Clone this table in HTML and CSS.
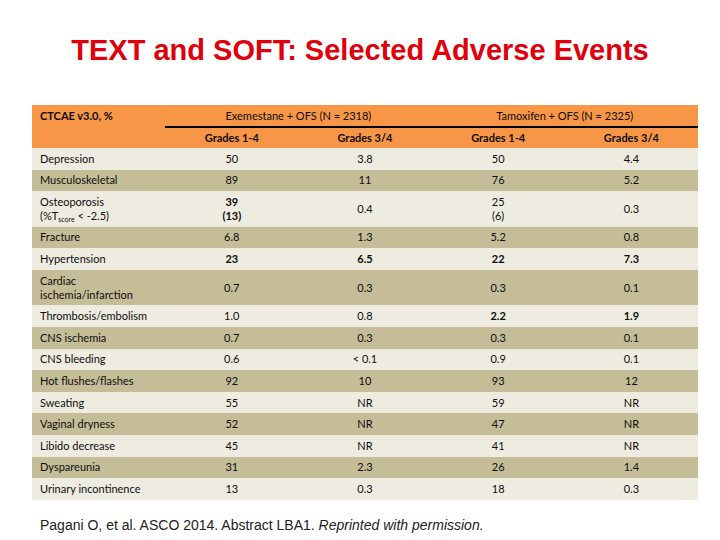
FILE: index.html
```html
<!DOCTYPE html>
<html lang="en">
<head>
<meta charset="utf-8">
<title>TEXT and SOFT: Selected Adverse Events</title>
<link rel="stylesheet" href="styles.css">
</head>
<body>
<div class="slide">
  <h1 class="title">TEXT and SOFT: Selected Adverse Events</h1>
  <table class="ae">
    <colgroup>
      <col class="c"><col class="c"><col class="c"><col class="c"><col class="c">
    </colgroup>
    <thead>
      <tr class="h1">
        <th class="label" rowspan="2">CTCAE v3.0, %</th>
        <th class="group" colspan="2">Exemestane + OFS (N = 2318)</th>
        <th class="group" colspan="2">Tamoxifen + OFS (N = 2325)</th>
      </tr>
      <tr class="h2">
        <th class="grade">Grades 1-4</th>
        <th class="grade">Grades 3/4</th>
        <th class="grade">Grades 1-4</th>
        <th class="grade">Grades 3/4</th>
      </tr>
    </thead>
    <tbody>
      <tr class="r light"><td>Depression</td><td>50</td><td>3.8</td><td>50</td><td>4.4</td></tr>
      <tr class="r dark"><td>Musculoskeletal</td><td>89</td><td>11</td><td>76</td><td>5.2</td></tr>
      <tr class="r tall light"><td>Osteoporosis<br>(%T<sub>score</sub> &lt; -2.5)</td><td><b>39</b><br><b>(13)</b></td><td>0.4</td><td>25<br>(6)</td><td>0.3</td></tr>
      <tr class="r dark"><td>Fracture</td><td>6.8</td><td>1.3</td><td>5.2</td><td>0.8</td></tr>
      <tr class="r light"><td>Hypertension</td><td><b>23</b></td><td><b>6.5</b></td><td><b>22</b></td><td><b>7.3</b></td></tr>
      <tr class="r tall dark"><td>Cardiac<br>ischemia/infarction</td><td>0.7</td><td>0.3</td><td>0.3</td><td>0.1</td></tr>
      <tr class="r light"><td>Thrombosis/embolism</td><td>1.0</td><td>0.8</td><td><b>2.2</b></td><td><b>1.9</b></td></tr>
      <tr class="r dark"><td>CNS ischemia</td><td>0.7</td><td>0.3</td><td>0.3</td><td>0.1</td></tr>
      <tr class="r light"><td>CNS bleeding</td><td>0.6</td><td>&lt; 0.1</td><td>0.9</td><td>0.1</td></tr>
      <tr class="r dark"><td>Hot flushes/flashes</td><td>92</td><td>10</td><td>93</td><td>12</td></tr>
      <tr class="r light"><td>Sweating</td><td>55</td><td>NR</td><td>59</td><td>NR</td></tr>
      <tr class="r dark"><td>Vaginal dryness</td><td>52</td><td>NR</td><td>47</td><td>NR</td></tr>
      <tr class="r light"><td>Libido decrease</td><td>45</td><td>NR</td><td>41</td><td>NR</td></tr>
      <tr class="r dark"><td>Dyspareunia</td><td>31</td><td>2.3</td><td>26</td><td>1.4</td></tr>
      <tr class="r light"><td>Urinary incontinence</td><td>13</td><td>0.3</td><td>18</td><td>0.3</td></tr>
    </tbody>
  </table>
  <p class="source">Pagani O, et al. ASCO 2014. Abstract LBA1. <em>Reprinted with permission.</em></p>
</div>
</body>
</html>
```
FILE: styles.css
```css
html, body {
  margin: 0;
  padding: 0;
  background: #ffffff;
}

.slide {
  width: 720px;
  height: 540px;
  overflow: hidden;
  padding-top: 33px;
  box-sizing: border-box;
}

.title {
  margin: 0;
  font-family: "Liberation Sans", Arial, sans-serif;
  font-weight: bold;
  font-size: 29px;
  line-height: 34px;
  color: #e0000b;
  text-align: center;
}

.ae {
  margin: 38px 0 0 32px;
  width: 666px;
  table-layout: fixed;
  border-collapse: collapse;
  border-spacing: 0;
  font-family: Lato, "Liberation Sans", sans-serif;
  font-size: 11px;
  color: #0d0d0d;
}

.ae col.c {
  width: 133.2px;
}

.ae th,
.ae td {
  padding: 0;
  line-height: 14px;
}

.ae thead tr {
  background: #f79646;
}

.ae .h1 {
  height: 22px;
}

.ae .h2 {
  height: 21px;
}

.ae th.label {
  text-align: left;
  vertical-align: top;
  padding: 4px 0 0 8px;
  font-weight: bold;
}

.ae th.group {
  font-weight: normal;
  text-align: center;
  vertical-align: middle;
  border-bottom: 2px solid #000000;
}

.ae th.grade {
  font-weight: bold;
  text-align: center;
  vertical-align: middle;
}

.ae tr.r {
  height: 21.6px;
}

.ae tr.tall {
  height: 35.5px;
}

.ae tr.light {
  background: #eeece1;
}

.ae tr.dark {
  background: #c4bd97;
}

.ae td {
  text-align: center;
  vertical-align: middle;
}

.ae td:first-child {
  text-align: left;
  padding-left: 8px;
}

.ae td b {
  font-weight: bold;
}

.ae sub {
  font-size: 7px;
  line-height: 0;
  vertical-align: -2px;
}

.source {
  margin: 17px 0 0 40px;
  font-family: "Liberation Sans", Arial, sans-serif;
  font-size: 14px;
  line-height: 16px;
  color: #222222;
}

.source em {
  font-style: italic;
}
```
